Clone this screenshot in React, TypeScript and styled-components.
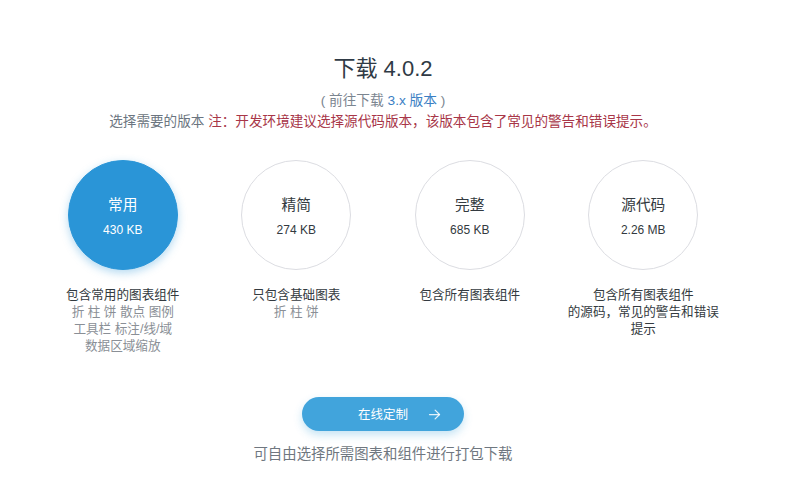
import React from "react";
import styled, { createGlobalStyle } from "styled-components";

const Global = createGlobalStyle`
  html, body { margin: 0; padding: 0; background: #fff; }
  body { font-family: "Liberation Sans", "Noto Sans CJK SC", sans-serif; }
`;

const Page = styled.div`
  width: 766px;
  padding-top: 52px;
  text-align: center;
`;

const Title = styled.h1`
  margin: 0;
  font-size: 22px;
  line-height: 34px;
  font-weight: normal;
  color: #2f3a45;
`;

const Sub = styled.div`
  margin-top: 5px;
  font-size: 13.7px;
  line-height: 20px;
  color: #7b8590;
`;

const Link = styled.span`
  color: #3b7fc4;
`;

const Notice = styled.div`
  margin-top: 1px;
  font-size: 13.6px;
  line-height: 20px;
  color: #6b7580;
`;

const Warn = styled.span`
  color: #a83648;
`;

const Columns = styled.div`
  width: 694px;
  margin: 28px auto 0;
  display: grid;
  grid-template-columns: repeat(4, 1fr);
`;

const Column = styled.div`
  display: flex;
  flex-direction: column;
  align-items: center;
`;

const Circle = styled.div<{ $active?: boolean }>`
  width: 110px;
  height: 110px;
  box-sizing: border-box;
  border-radius: 50%;
  display: flex;
  flex-direction: column;
  align-items: center;
  justify-content: center;
  background: ${(p) => (p.$active ? "#2a95d7" : "#fff")};
  border: 1px solid ${(p) => (p.$active ? "#2a95d7" : "#dcdde2")};
  color: ${(p) => (p.$active ? "#fff" : "#333a40")};
  box-shadow: ${(p) => (p.$active ? "0 3px 8px rgba(42,149,215,0.35)" : "none")};
`;

const Name = styled.div`
  font-size: 14.7px;
  line-height: 20px;
  margin-top: 2px;
`;

const Size = styled.div`
  font-size: 12px;
  line-height: 16px;
  margin-top: 7px;
`;

const Desc = styled.div`
  margin-top: 16.5px;
  font-size: 12.6px;
  line-height: 17px;
  color: #8a8f96;
`;

const DescMain = styled.div`
  color: #333a40;
`;

const Button = styled.button`
  position: relative;
  margin: 42px auto 0;
  width: 162px;
  height: 34px;
  border: none;
  border-radius: 17px;
  background: #41a4dc;
  color: #fff;
  font-family: inherit;
  font-size: 12.5px;
  display: flex;
  align-items: center;
  justify-content: center;
  padding: 0 0 0 0;
  box-shadow: 0 4px 8px rgba(65,164,220,0.3);
  cursor: pointer;
`;

const Arrow = styled.svg`
  position: absolute;
  right: 22px;
  top: 10px;
  width: 15px;
  height: 15px;
  stroke: rgba(255,255,255,0.85);
`;

const Footer = styled.div`
  margin-top: 13px;
  font-size: 14.4px;
  line-height: 20px;
  color: #6f7780;
`;

const items = [
  { name: "常用", size: "430 KB", active: true, main: "包含常用的图表组件", rest: ["折 柱 饼 散点 图例", "工具栏 标注/线/域", "数据区域缩放"] },
  { name: "精简", size: "274 KB", main: "只包含基础图表", rest: ["折 柱 饼"] },
  { name: "完整", size: "685 KB", main: "包含所有图表组件", rest: [] },
  { name: "源代码", size: "2.26 MB", main: "包含所有图表组件\n的源码，常见的警告和错误\n提示", rest: [] },
];

export default function App() {
  return (
    <>
      <Global />
      <Page>
        <Title>下载 4.0.2</Title>
        <Sub>( 前往下载 <Link>3.x 版本</Link> )</Sub>
        <Notice>
          选择需要的版本 <Warn>注：开发环境建议选择源代码版本，该版本包含了常见的警告和错误提示。</Warn>
        </Notice>
        <Columns>
          {items.map((it) => (
            <Column key={it.name}>
              <Circle $active={it.active}>
                <Name>{it.name}</Name>
                <Size>{it.size}</Size>
              </Circle>
              <Desc>
                {it.main.split("\n").map((l) => (
                  <DescMain key={l}>{l}</DescMain>
                ))}
                {it.rest.map((l) => (
                  <div key={l}>{l}</div>
                ))}
              </Desc>
            </Column>
          ))}
        </Columns>
        <Button>
          在线定制
          <Arrow viewBox="0 0 24 24" fill="none" strokeWidth="2" strokeLinecap="round" strokeLinejoin="round">
            <path d="M4 12h16" />
            <path d="M13 5l7 7-7 7" />
          </Arrow>
        </Button>
        <Footer>可自由选择所需图表和组件进行打包下载</Footer>
      </Page>
    </>
  );
}
